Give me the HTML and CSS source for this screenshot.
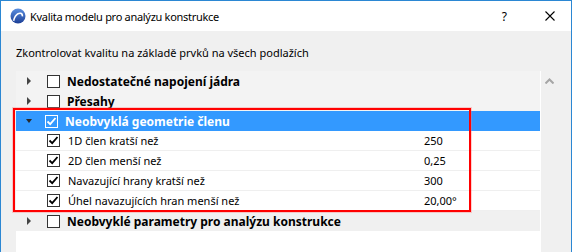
FILE: index.html
```html
<!DOCTYPE html>
<html>
<head>
<meta charset="UTF-8">
<title>Kvalita modelu pro analýzu konstrukce</title>
<link rel="stylesheet" href="styles.css">
</head>
<body>
<div class="window">
	<div class="titlebar">
		<svg class="logo" width="16" height="16" viewBox="0 0 16 16">
			<defs>
				<linearGradient id="lg" x1="0" y1="0" x2="0" y2="1">
					<stop offset="0" stop-color="#5b8fe0"/>
					<stop offset="1" stop-color="#1c3f96"/>
				</linearGradient>
			</defs>
			<circle cx="8" cy="8" r="7.5" fill="url(#lg)"/>
			<path d="M3 12.5 C4 7 7.5 3.8 11 4.6 C12.6 5 13.3 6.5 13.2 8.5 L11.6 8.2 C11.6 6.9 11 6.2 10.2 6.1 C7.8 5.9 5.3 8.8 4.3 13.3 Z" fill="#fff"/>
		</svg>
		<span class="title">Kvalita modelu pro analýzu konstrukce</span>
		<span class="help">?</span>
		<svg class="close" width="10" height="10" viewBox="0 0 10 10">
			<path d="M0.5 0.5 L9.5 9.5 M9.5 0.5 L0.5 9.5" stroke="#000" stroke-width="1.1"/>
		</svg>
	</div>
	<div class="content">
		<div class="hint">Zkontrolovat kvalitu na základě prvků na všech podlažích</div>
		<div class="panel">
			<div class="tree">
				<div class="row group">
					<span class="arrow"></span>
					<span class="box"></span>
					<span class="label">Nedostatečné napojení jádra</span>
				</div>
				<div class="row group">
					<span class="arrow"></span>
					<span class="box"></span>
					<span class="label">Přesahy</span>
				</div>
				<div class="row group selected">
					<span class="arrow open"></span>
					<span class="box"><svg width="11" height="11" viewBox="0 0 11 11"><path d="M1.5 5.5 L4.2 8.2 L9.5 2" fill="none" stroke="#fff" stroke-width="1.8"/></svg></span>
					<span class="label">Neobvyklá geometrie členu</span>
				</div>
				<div class="row child">
					<span class="box"><svg width="11" height="11" viewBox="0 0 11 11"><path d="M1.5 5.5 L4.2 8.2 L9.5 2" fill="none" stroke="#000" stroke-width="1.8"/></svg></span>
					<span class="label">1D člen kratší než</span>
					<span class="value">250</span>
				</div>
				<div class="row child">
					<span class="box"><svg width="11" height="11" viewBox="0 0 11 11"><path d="M1.5 5.5 L4.2 8.2 L9.5 2" fill="none" stroke="#000" stroke-width="1.8"/></svg></span>
					<span class="label">2D člen menší než</span>
					<span class="value">0,25</span>
				</div>
				<div class="row child">
					<span class="box"><svg width="11" height="11" viewBox="0 0 11 11"><path d="M1.5 5.5 L4.2 8.2 L9.5 2" fill="none" stroke="#000" stroke-width="1.8"/></svg></span>
					<span class="label">Navazující hrany kratší než</span>
					<span class="value">300</span>
				</div>
				<div class="row child">
					<span class="box"><svg width="11" height="11" viewBox="0 0 11 11"><path d="M1.5 5.5 L4.2 8.2 L9.5 2" fill="none" stroke="#000" stroke-width="1.8"/></svg></span>
					<span class="label">Úhel navazujících hran menší než</span>
					<span class="value">20,00°</span>
				</div>
				<div class="row group last">
					<span class="arrow"></span>
					<span class="box"></span>
					<span class="label">Neobvyklé parametry pro analýzu konstrukce</span>
				</div>
			</div>
			<div class="scrollbar">
				<svg width="9" height="6" viewBox="0 0 9 6"><path d="M0.5 5.5 L4.5 1.5 L8.5 5.5" fill="none" stroke="#a6a6a6" stroke-width="2"/></svg>
			</div>
		</div>
	</div>
	<div class="mark"></div>
</div>
</body>
</html>
```

FILE: styles.css
```css
* {
	margin: 0;
	padding: 0;
	box-sizing: border-box;
}
body {
	font-family: "Noto Sans", sans-serif;
	font-size: 11px;
	color: #000;
	background: #f0f0f0;
}
.window {
	position: relative;
	width: 572px;
	height: 252px;
	border: 1px solid #2b87d3;
	border-bottom: none;
	background: #f0f0f0;
	overflow: hidden;
}
.titlebar {
	height: 30px;
	background: #fff;
	display: flex;
	align-items: center;
	padding-left: 9px;
}
.logo {
	margin-right: 4px;
}
.title {
	font-size: 11px;
	letter-spacing: -0.3px;
	flex: 1;
}
.help {
	font-size: 12px;
	margin-right: 38px;
}
.close {
	margin-right: 16px;
}
.content {
	padding-left: 15px;
	padding-right: 13px;
}
.hint {
	height: 40px;
	line-height: 44px;
}
.panel {
	display: flex;
	height: 200px;
}
.tree {
	flex: 1;
	background: #fff;
	border-right: 1px solid #fff;
}
.scrollbar {
	width: 17px;
	background: #f0f0f0;
	display: flex;
	justify-content: center;
	padding-top: 7px;
}
.row {
	height: 20px;
	display: flex;
	align-items: center;
	position: relative;
}
.group {
	background: #f3f3f3;
	font-weight: bold;
	font-size: 12px;
}
.group.last {
	background: #f0f0f0;
}
.selected {
	background: #3399ff;
	color: #fff;
}
.child {
	border-bottom: 1px solid #efefef;
}
.arrow {
	width: 0;
	height: 0;
	margin-left: 11px;
	margin-right: 16px;
	border-left: 4px solid #444;
	border-top: 4px solid transparent;
	border-bottom: 4px solid transparent;
}
.arrow.open {
	margin-left: 10px;
	margin-right: 13px;
	border-left: 3.5px solid transparent;
	border-right: 3.5px solid transparent;
	border-top: 4px solid #2a2a2a;
	border-bottom: none;
}
.child .box {
	margin-left: 31px;
}
.box {
	width: 13px;
	height: 13px;
	border: 1px solid #333;
	background: #fff;
	display: flex;
	align-items: center;
	justify-content: center;
	margin-right: 7px;
}
.selected .box {
	border-color: #fff;
	background: transparent;
}
.child .label {
	margin-left: 1px;
	width: 356px;
}
.mark {
	position: absolute;
	left: 12px;
	top: 107px;
	width: 458px;
	height: 104px;
	border: 2px solid #ff0000;
	box-shadow: 0 0 0 1px rgba(255, 120, 120, 0.35);
}
```
